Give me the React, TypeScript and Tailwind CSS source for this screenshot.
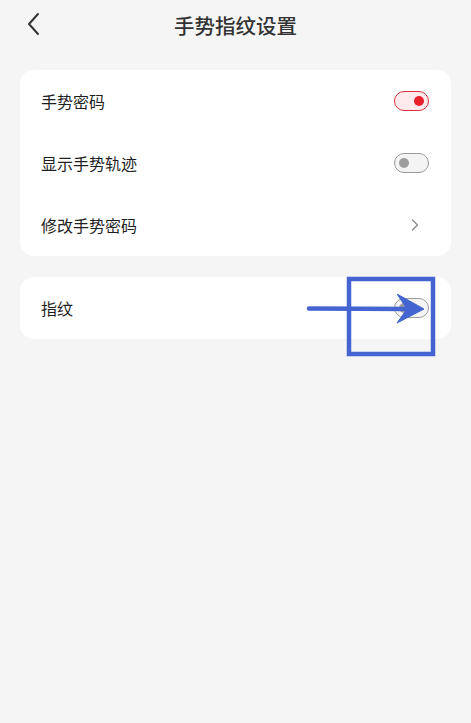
import React from "react";

const font = { fontFamily: '"Noto Sans CJK SC", "Noto Sans", sans-serif' };

function Toggle({ on }: { on: boolean }) {
  return (
    <span
      className={`flex h-[20px] w-[35px] items-center rounded-full border-[1.5px] px-[4px] ${
        on ? "justify-end border-[#d8323c] bg-[#fdeaec]" : "justify-start border-[#9a9a9a] bg-[#f4f4f4]"
      }`}
    >
      <span className={`size-[10px] rounded-full ${on ? "bg-[#e8202c]" : "bg-[#9d9d9d]"}`} />
    </span>
  );
}

function Row({ label, right }: { label: string; right: React.ReactNode }) {
  return (
    <div className="flex h-[62px] items-center justify-between pl-[21px] pr-[22px]">
      <span className="text-[16px] text-[#1f1f1f]">{label}</span>
      {right}
    </div>
  );
}

function Chevron() {
  return (
    <svg width="20" height="20" viewBox="0 0 20 20" className="mr-[4px]">
      <path d="M7.5 5l5 5-5 5" fill="none" stroke="#8a8a8a" strokeWidth="1.4" strokeLinecap="round" strokeLinejoin="round" />
    </svg>
  );
}

export default function App() {
  return (
    <div className="relative min-h-[723px] w-full bg-[#f5f5f5]" style={font}>
      <header className="relative flex h-[50px] items-center justify-center">
        <button className="absolute left-[22px] top-[11px]">
          <svg width="24" height="26" viewBox="0 0 24 26">
            <path d="M16 3L7 13l9 10" fill="none" stroke="#333" strokeWidth="2" strokeLinecap="round" strokeLinejoin="round" />
          </svg>
        </button>
        <h1 className="text-[20.5px] font-medium text-[#333]">手势指纹设置</h1>
      </header>

      <div className="mx-[20px] mt-[20px] overflow-hidden rounded-[14px] bg-white">
        <Row label="手势密码" right={<Toggle on />} />
        <Row label="显示手势轨迹" right={<Toggle on={false} />} />
        <Row label="修改手势密码" right={<Chevron />} />
      </div>

      <div className="mx-[20px] mt-[21px] overflow-hidden rounded-[14px] bg-white">
        <Row label="指纹" right={<Toggle on={false} />} />
      </div>

      {/* annotation overlay */}
      <svg className="pointer-events-none absolute left-0 top-0" width="471" height="723" viewBox="0 0 471 723">
        <rect x="349" y="279" width="84" height="75" fill="none" stroke="#4465d1" strokeWidth="4.5" />
        <line x1="309" y1="308.5" x2="412" y2="309" stroke="#4465d1" strokeWidth="4.5" strokeLinecap="round" />
        <path d="M397 294 L424 309 L397 323 L407 309 Z" fill="#4465d1" stroke="#4465d1" strokeWidth="1" strokeLinejoin="round" />
      </svg>
    </div>
  );
}
